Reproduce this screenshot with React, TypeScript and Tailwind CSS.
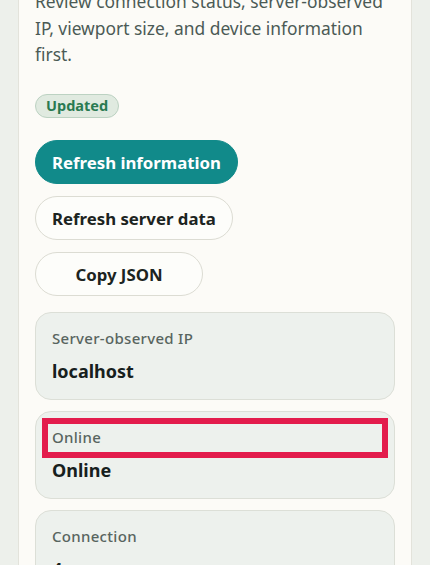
import React from "react";

const font = { fontFamily: '"Noto Sans", "Open Sans", Arial, sans-serif' };

function InfoCard({ label, value, highlight }: { label: string; value: string; highlight?: boolean }) {
  return (
    <div className="flex flex-col gap-[10px] rounded-[16px] border border-[#dcdfd7] bg-[#edf1ed] px-4 pt-[15px] pb-[15px]">
      <div className="relative">
        <div className="text-[15px] leading-[20px] font-medium tracking-[0.02em] text-[#58655f]">{label}</div>
        {highlight && (
          <div className="pointer-events-none absolute -left-[10px] -right-[10px] -top-[9px] -bottom-[11px] border-[6px] border-[#e31c4c]" />
        )}
      </div>
      <div className="text-[18px] leading-[26px] font-bold text-[#17201d]">{value}</div>
    </div>
  );
}

export default function App() {
  return (
    <div className="h-[565px] overflow-hidden bg-[#edf0eb] px-[18px]" style={font}>
      <div className="-mt-[40px] flex flex-col rounded-[20px] border border-[#e3e3db] bg-[#fcfbf7] px-4 pt-[27px] pb-8">
        <p className="text-[17.4px] leading-[26.7px] text-[#4b5a55]">
          Review connection status, server-observed IP, viewport size, and device information first.
        </p>
        <span className="mt-[26px] inline-flex h-6 items-center self-start rounded-full border border-[#bcd2c2] bg-[#e0eae0] px-[10px] text-[14.5px] font-bold text-[#2a7a52]">
          Updated
        </span>
        <div className="mt-[22px] flex flex-col items-start gap-3">
          <button className="flex h-11 items-center justify-center rounded-full border border-[#118a8a] bg-[#118a8a] px-4 text-[16.8px] font-bold text-white">
            Refresh information
          </button>
          <button className="flex h-11 items-center justify-center rounded-full border border-[#dcdcd3] bg-[#fdfdfa] px-4 text-[16.8px] font-bold text-[#1c2421]">
            Refresh server data
          </button>
          <button className="flex h-11 min-w-[168px] items-center justify-center rounded-full border border-[#dcdcd3] bg-[#fdfdfa] px-4 text-[16.8px] font-bold text-[#1c2421]">
            Copy JSON
          </button>
        </div>
        <div className="mt-4 flex flex-col gap-[11px]">
          <InfoCard label="Server-observed IP" value="localhost" />
          <InfoCard label="Online" value="Online" highlight />
          <InfoCard label="Connection" value="4g" />
          <InfoCard label="Viewport" value="430 × 565" />
        </div>
      </div>
    </div>
  );
}
